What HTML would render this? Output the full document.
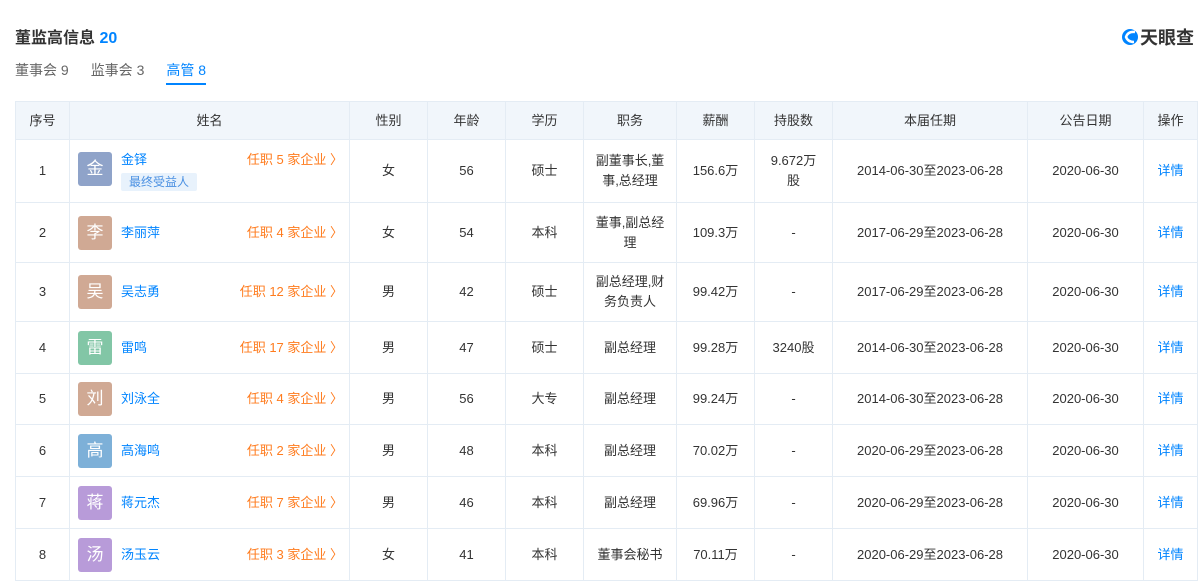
<!DOCTYPE html>
<html><head><meta charset="utf-8"><style>
*{margin:0;padding:0;box-sizing:border-box}
body{width:1200px;height:584px;background:#fff;font-family:"Liberation Sans","Noto Sans CJK SC",sans-serif;color:#333;position:relative;overflow:hidden}
.title{position:absolute;left:15px;top:24px;font-size:16px;font-weight:bold;color:#333}
.title b{color:#0084ff}
.logo{position:absolute;right:6px;top:24px;font-size:18px;font-weight:bold;color:#333;display:flex;align-items:center}
.tabs{position:absolute;left:15px;top:60px;font-size:14px;color:#666}
.tabs span{margin-right:22px;display:inline-block}
.tabs .on{color:#0084ff;border-bottom:2px solid #0084ff;padding-bottom:3px}
table{position:absolute;left:15px;top:101px;border-collapse:collapse;table-layout:fixed;font-size:13px}
td,th{border:1px solid #e4ecf4;text-align:center;vertical-align:middle;padding:0 8px;line-height:20px}
th{background:#f1f6fb;font-weight:normal;color:#333;height:38px;font-size:13px}
td.s{padding:0 11px}
.n{display:flex;align-items:flex-start;text-align:left}
.av{width:34px;height:34px;border-radius:3px;color:#fff;font-size:17px;line-height:34px;text-align:center;flex:none}
.nm{color:#0084ff;margin-left:9px;flex:1}
.job{color:#ff7b1d;white-space:nowrap;margin-right:-2px}
.tag{display:inline-block;background:#e8f2fc;color:#4a90e2;font-size:12px;padding:0 8px;line-height:18px;border-radius:2px;margin-top:3px}
.a{color:#0084ff}
</style></head><body>
<div class="title">董监高信息 <b>20</b></div>
<div class="logo"><svg width="20" height="20" viewBox="0 0 20 20"><circle cx="10" cy="10" r="8" fill="#0084ff"/><path d="M15 5 Q8 4 6 10 Q8 15 14 15" stroke="#fff" stroke-width="2.5" fill="none"/></svg>天眼查</div>
<div class="tabs"><span>董事会 9</span><span>监事会 3</span><span class="on">高管 8</span></div>
<table>
<colgroup><col style="width:54px"><col style="width:280px"><col style="width:78px"><col style="width:78px"><col style="width:78px"><col style="width:93px"><col style="width:78px"><col style="width:78px"><col style="width:195px"><col style="width:116px"><col style="width:54px"></colgroup>
<tr><th>序号</th><th>姓名</th><th>性别</th><th>年龄</th><th>学历</th><th>职务</th><th>薪酬</th><th>持股数</th><th>本届任期</th><th>公告日期</th><th>操作</th></tr>
<tr style="height:63px"><td>1</td><td><div class="n"><div class="av" style="background:#8fa3c9;margin-top:2px">金</div><div class="nm">金铎<br><span class="tag">最终受益人</span></div><span class="job">任职 5 家企业 〉</span></div></td><td>女</td><td>56</td><td>硕士</td><td>副董事长,董事,总经理</td><td>156.6万</td><td class="s">9.672万股</td><td>2014-06-30至2023-06-28</td><td>2020-06-30</td><td class="a">详情</td></tr>
<tr style="height:60px"><td>2</td><td><div class="n" style="align-items:center"><div class="av" style="background:#d0a994">李</div><div class="nm">李丽萍</div><span class="job">任职 4 家企业 〉</span></div></td><td>女</td><td>54</td><td>本科</td><td>董事,副总经理</td><td>109.3万</td><td>-</td><td>2017-06-29至2023-06-28</td><td>2020-06-30</td><td class="a">详情</td></tr>
<tr style="height:59px"><td>3</td><td><div class="n" style="align-items:center"><div class="av" style="background:#d0a994">吴</div><div class="nm">吴志勇</div><span class="job">任职 12 家企业 〉</span></div></td><td>男</td><td>42</td><td>硕士</td><td>副总经理,财务负责人</td><td>99.42万</td><td>-</td><td>2017-06-29至2023-06-28</td><td>2020-06-30</td><td class="a">详情</td></tr>
<tr style="height:52px"><td>4</td><td><div class="n" style="align-items:center"><div class="av" style="background:#82c6a6">雷</div><div class="nm">雷鸣</div><span class="job">任职 17 家企业 〉</span></div></td><td>男</td><td>47</td><td>硕士</td><td>副总经理</td><td>99.28万</td><td>3240股</td><td>2014-06-30至2023-06-28</td><td>2020-06-30</td><td class="a">详情</td></tr>
<tr style="height:51px"><td>5</td><td><div class="n" style="align-items:center"><div class="av" style="background:#d0a994">刘</div><div class="nm">刘泳全</div><span class="job">任职 4 家企业 〉</span></div></td><td>男</td><td>56</td><td>大专</td><td>副总经理</td><td>99.24万</td><td>-</td><td>2014-06-30至2023-06-28</td><td>2020-06-30</td><td class="a">详情</td></tr>
<tr style="height:52px"><td>6</td><td><div class="n" style="align-items:center"><div class="av" style="background:#7db0d8">高</div><div class="nm">高海鸣</div><span class="job">任职 2 家企业 〉</span></div></td><td>男</td><td>48</td><td>本科</td><td>副总经理</td><td>70.02万</td><td>-</td><td>2020-06-29至2023-06-28</td><td>2020-06-30</td><td class="a">详情</td></tr>
<tr style="height:52px"><td>7</td><td><div class="n" style="align-items:center"><div class="av" style="background:#b89bd9">蒋</div><div class="nm">蒋元杰</div><span class="job">任职 7 家企业 〉</span></div></td><td>男</td><td>46</td><td>本科</td><td>副总经理</td><td>69.96万</td><td>-</td><td>2020-06-29至2023-06-28</td><td>2020-06-30</td><td class="a">详情</td></tr>
<tr style="height:52px"><td>8</td><td><div class="n" style="align-items:center"><div class="av" style="background:#b89bd9">汤</div><div class="nm">汤玉云</div><span class="job">任职 3 家企业 〉</span></div></td><td>女</td><td>41</td><td>本科</td><td>董事会秘书</td><td>70.11万</td><td>-</td><td>2020-06-29至2023-06-28</td><td>2020-06-30</td><td class="a">详情</td></tr>
</table>
</body></html>
